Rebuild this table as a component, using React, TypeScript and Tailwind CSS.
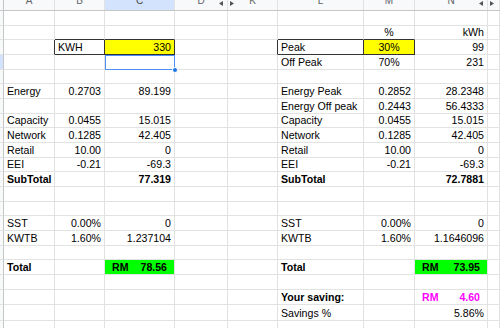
type Spec =
  | string
  | {
      t?: string
      b?: boolean
      al?: 'l' | 'c' | 'r'
      bg?: string
      cls?: string
      rm?: string
      color?: string
    }

const cols = [
  { k: 'A', w: 51 },
  { k: 'B', w: 50 },
  { k: 'C', w: 70 },
  { k: 'D', w: 53 },
  { k: 'K', w: 50 },
  { k: 'L', w: 86 },
  { k: 'M', w: 51 },
  { k: 'N', w: 73 },
  { k: '', w: 12 },
]

const dark = 'border-b-[#333]'
const darkR = 'border-r-[#333]'

const rows: Record<string, Spec>[] = [
  {},
  { B: { cls: dark }, C: { cls: dark }, L: { cls: dark }, M: { t: '%', al: 'c', cls: dark }, N: 'kWh' },
  {
    A: { cls: darkR },
    B: { t: 'KWH', cls: `${darkR} ${dark}` },
    C: { t: '330', bg: 'bg-[#ffff00]', cls: `${darkR} ${dark}` },
    K: { cls: darkR },
    L: { t: 'Peak', cls: `${darkR} ${dark}` },
    M: { t: '30%', al: 'c', bg: 'bg-[#ffff00]', cls: `${darkR} ${dark}` },
    N: '99',
  },
  { L: 'Off Peak', M: { t: '70%', al: 'c' }, N: '231' },
  {},
  { A: 'Energy', B: '0.2703', C: '89.199', L: 'Energy Peak', M: '0.2852', N: '28.2348' },
  { L: 'Energy Off peak', M: '0.2443', N: '56.4333' },
  { A: 'Capacity', B: '0.0455', C: '15.015', L: 'Capacity', M: '0.0455', N: '15.015' },
  { A: 'Network', B: '0.1285', C: '42.405', L: 'Network', M: '0.1285', N: '42.405' },
  { A: 'Retail', B: '10.00', C: '0', L: 'Retail', M: '10.00', N: '0' },
  { A: 'EEI', B: '-0.21', C: '-69.3', L: 'EEI', M: '-0.21', N: '-69.3' },
  {
    A: { t: 'SubTotal', b: true },
    C: { t: '77.319', b: true },
    L: { t: 'SubTotal', b: true },
    N: { t: '72.7881', b: true },
  },
  {},
  {},
  { A: 'SST', B: '0.00%', C: '0', L: 'SST', M: '0.00%', N: '0' },
  { A: 'KWTB', B: '1.60%', C: '1.237104', L: 'KWTB', M: '1.60%', N: '1.1646096' },
  {},
  {
    A: { t: 'Total', b: true },
    C: { rm: '78.56', b: true, bg: 'bg-[#00ff00]' },
    L: { t: 'Total', b: true },
    N: { rm: '73.95', b: true, bg: 'bg-[#00ff00]' },
  },
  {},
  { L: { t: 'Your saving:', b: true }, N: { rm: '4.60', b: true, color: 'text-[#ff00ff]' } },
  { L: 'Savings %', N: '5.86%' },
  {},
]

function Tri({ dir }: { dir: 'l' | 'r' }) {
  return (
    <svg width="4" height="5" viewBox="0 0 4 5" className="fill-[#555]">
      {dir === 'l' ? <path d="M4 0 L0 2.5 L4 5 Z" /> : <path d="M0 0 L4 2.5 L0 5 Z" />}
    </svg>
  )
}

function Cell({ w, spec }: { w: number; spec?: Spec }) {
  const s = typeof spec === 'string' ? { t: spec } : spec ?? {}
  const isNum = s.t !== undefined && /^-?[\d.,%]+$/.test(s.t)
  const al = s.al ?? (isNum || s.t === 'kWh' ? 'r' : 'l')
  const justify = al === 'r' ? 'justify-end' : al === 'c' ? 'justify-center' : 'justify-start'
  return (
    <div
      style={{ width: w }}
      className={`shrink-0 h-full flex items-center overflow-hidden border-r border-b border-[#e2e2e2] whitespace-nowrap ${
        s.bg ?? ''
      } ${s.cls ?? ''} ${s.b ? 'font-bold' : ''} ${s.color ?? 'text-black'}`}
    >
      {s.rm ? (
        <div className="flex w-full justify-between px-[7px]">
          <span>RM</span>
          <span>{s.rm}</span>
        </div>
      ) : (
        <div className={`flex w-full px-[3px] ${justify}`}>{s.t}</div>
      )}
    </div>
  )
}

export default function App() {
  return (
    <div className="w-[500px] h-[328px] overflow-hidden bg-white font-['Liberation_Sans',Arial,sans-serif] text-[10.6px] leading-[12px]">
      {/* column headers */}
      <div className="flex h-[11px] bg-[#f8f9fa] border-b border-[#c4c7c5] text-[#5f6368] text-[10px]">
        <div className="w-[4px] shrink-0 border-r border-[#c4c7c5]" />
        {cols.map((c) => (
          <div
            key={c.k || 'x'}
            style={{ width: c.w }}
            className={`relative shrink-0 flex items-end justify-center pb-[4px] leading-none overflow-hidden border-r border-[#e2e2e2] ${
              c.k === 'C' ? 'bg-[#d3e3fd] text-[#444]' : ''
            }`}
          >
            {c.k}
            {(c.k === 'D' || c.k === 'N') && (
              <span className="absolute right-[4px] top-[1px]">
                <Tri dir="l" />
              </span>
            )}
            {(c.k === 'K' || c.k === '') && (
              <span className="absolute left-[2px] top-[1px]">
                <Tri dir="r" />
              </span>
            )}
          </div>
        ))}
      </div>

      {rows.map((r, i) => (
        <div key={i} className={`flex ${i < 18 ? 'h-[14.67px]' : 'h-[15.3px]'}`}>
          <div
            className={`w-[4px] shrink-0 border-r border-b border-r-[#c4c7c5] border-b-[#e2e2e2] ${
              i === 3 ? 'bg-[#d3e3fd]' : 'bg-[#f8f9fa]'
            }`}
          />
          {cols.map((c) => (
            <div key={c.k || 'x'} className="relative shrink-0 h-full" style={{ width: c.w }}>
              <Cell w={c.w} spec={c.k ? r[c.k] : undefined} />
              {c.k === 'C' && i === 3 && (
                <>
                  {/* selected cell */}
                  <div className="absolute left-0 top-0 right-0 bottom-0 border border-[#4f8ef5]" />
                  <div className="absolute -right-[3px] -bottom-[3px] w-[6px] h-[6px] rounded-full bg-[#1a73e8] border border-white z-10" />
                </>
              )}
            </div>
          ))}
        </div>
      ))}
    </div>
  )
}
